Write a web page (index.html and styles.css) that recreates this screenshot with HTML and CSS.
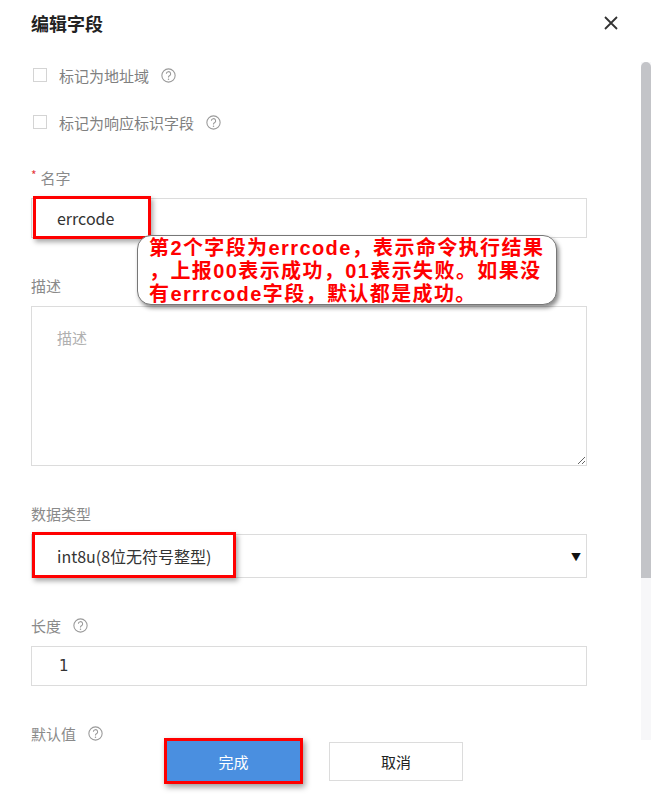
FILE: index.html
```html
<!DOCTYPE html>
<html lang="zh-CN">
<head>
<meta charset="utf-8">
<title>编辑字段</title>
<link rel="stylesheet" href="styles.css">
</head>
<body>
<div class="page">
	<div class="dialog">
		<div class="header">
			<h2 class="title">编辑字段</h2>
			<svg class="close" width="16" height="16" viewBox="0 0 16 16"><path d="M2 2L14 14M14 2L2 14" stroke="#333" stroke-width="1.8" fill="none"/></svg>
		</div>
		<div class="body">
			<div class="check"><span class="box"></span><span>标记为地址域</span><svg class="help" width="15" height="15" viewBox="0 0 14 14"><circle cx="7" cy="7" r="6.2" fill="none" stroke="#9a9a9a" stroke-width="1"/><path d="M5 5.4a2 2 0 1 1 2.9 1.8c-.6.3-.9.7-.9 1.3v.4" fill="none" stroke="#9a9a9a" stroke-width="1"/><circle cx="7" cy="10.4" r=".7" fill="#9a9a9a"/></svg></div>
			<div class="check check-2"><span class="box"></span><span>标记为响应标识字段</span><svg class="help" width="15" height="15" viewBox="0 0 14 14"><circle cx="7" cy="7" r="6.2" fill="none" stroke="#9a9a9a" stroke-width="1"/><path d="M5 5.4a2 2 0 1 1 2.9 1.8c-.6.3-.9.7-.9 1.3v.4" fill="none" stroke="#9a9a9a" stroke-width="1"/><circle cx="7" cy="10.4" r=".7" fill="#9a9a9a"/></svg></div>

			<div class="field field-first">
				<div class="label"><span class="req">*</span>名字</div>
				<div class="control">
					<div class="input">errcode</div>
					<span class="mark mark-name"></span>
					<div class="callout">第2个字段为errcode，表示命令执行结果<br>，上报00表示成功，01表示失败。如果没<br>有errrcode字段，默认都是成功。</div>
				</div>
			</div>

			<div class="field">
				<div class="label">描述</div>
				<textarea class="textarea" placeholder="描述"></textarea>
			</div>

			<div class="field field-type">
				<div class="label">数据类型</div>
				<div class="control">
					<div class="select"><span>int8u(8位无符号整型)</span><span class="arrow">▼</span></div>
					<span class="mark mark-type"></span>
				</div>
			</div>

			<div class="field field-type">
				<div class="label">长度<svg class="help" width="15" height="15" viewBox="0 0 14 14"><circle cx="7" cy="7" r="6.2" fill="none" stroke="#9a9a9a" stroke-width="1"/><path d="M5 5.4a2 2 0 1 1 2.9 1.8c-.6.3-.9.7-.9 1.3v.4" fill="none" stroke="#9a9a9a" stroke-width="1"/><circle cx="7" cy="10.4" r=".7" fill="#9a9a9a"/></svg></div>
				<div class="input input-num">1</div>
			</div>

			<div class="field">
				<div class="label">默认值<svg class="help" width="15" height="15" viewBox="0 0 14 14"><circle cx="7" cy="7" r="6.2" fill="none" stroke="#9a9a9a" stroke-width="1"/><path d="M5 5.4a2 2 0 1 1 2.9 1.8c-.6.3-.9.7-.9 1.3v.4" fill="none" stroke="#9a9a9a" stroke-width="1"/><circle cx="7" cy="10.4" r=".7" fill="#9a9a9a"/></svg></div>
			</div>
		</div>
		<div class="footer">
			<button class="btn btn-ok">完成</button>
			<button class="btn btn-cancel">取消</button>
		</div>
	</div>
	<div class="scrollbar"><div class="thumb"></div></div>
</div>
</body>
</html>
```

FILE: styles.css
```css
*{ margin:0; padding:0; box-sizing:border-box;}
body{ background:#fff; font-family:"Noto Sans CJK SC", "Noto Sans", sans-serif; color:#333; overflow:hidden;}
.page{ display:flex; width:651px; height:794px;}
.dialog{ flex:1; position:relative;}

.header{ display:flex; justify-content:space-between; align-items:center; padding:12px 22px 0 31px; height:34px;}
.title{ font-size:18px; font-weight:bold; color:#222; line-height:22px;}
.close{ display:block;}

.body{ padding:0 54px 0 31px;}
.check{ display:flex; align-items:center; height:20px; margin-top:31px; font-size:15px; color:#808080;}
.check-2{ margin-top:27px;}
.box{ width:14px; height:14px; border:1px solid #d4d4d4; margin:0 12px 0 2px;}
.help{ display:block; margin-left:12px;}

.field{ margin-top:37px;}
.field-first{ margin-top:35px;}
.field-type{ margin-top:37px;}
.label{ display:flex; align-items:center; height:20px; margin-bottom:11px; font-size:15px; color:#8a8a8a;}
.req{ color:#e4393c; font-size:12px; margin:0 4px 6px 0;}

.control{ position:relative;}
.input{ height:40px; border:1px solid #dcdcdc; padding-left:25px; line-height:38px; font-size:16px; color:#333;}
.input-num{ font-family:"DejaVu Sans", sans-serif; font-size:15px; padding-left:27px;}
.textarea{ display:block; width:100%; height:160px; border:1px solid #dcdcdc; padding:20px 25px; font-family:inherit; font-size:15px; resize:vertical; outline:none;}
.textarea::placeholder{ color:#b0b0b0;}
.select{ display:flex; justify-content:space-between; align-items:center; height:44px; border:1px solid #dcdcdc; padding:0 5px 0 25px; font-size:16px; color:#333;}
.arrow{ font-size:10px; color:#111;}

.mark{ position:absolute; border:3px solid #f00; box-shadow:2px 3px 5px rgba(0,0,0,.35);}
.mark-name{ left:2px; top:-2px; width:118px; height:43px;}
.mark-type{ left:1px; top:-2px; width:204px; height:46px;}

.callout{ position:absolute; left:106px; top:37px; width:420px; height:70px; padding:1px 0 0 11px; background:#fff; border:1px solid #777; border-radius:14px; box-shadow:2px 3px 4px rgba(0,0,0,.45); font-family:"Liberation Sans", "Noto Sans CJK SC", sans-serif; font-size:20px; font-weight:bold; line-height:23px; letter-spacing:1.4px; color:#f00; white-space:nowrap;}

.footer{ position:absolute; left:0; top:738px; display:flex; align-items:center; gap:26px; padding-left:164px;}
.btn{ font-family:inherit; font-size:15px; cursor:pointer;}
.btn-ok{ width:139px; height:46px; background:#4a8fe0; color:#fff; border:3px solid #f00; box-shadow:2px 3px 6px rgba(0,0,0,.4);}
.btn-cancel{ width:134px; height:39px; background:#fff; color:#222; border:1px solid #dcdcdc;}

.scrollbar{ width:10px; height:678px; margin-top:62px; background:#f7f7f9;}
.thumb{ height:516px; background:#c3c4c8; border-radius:5px 5px 0 0;}
```
